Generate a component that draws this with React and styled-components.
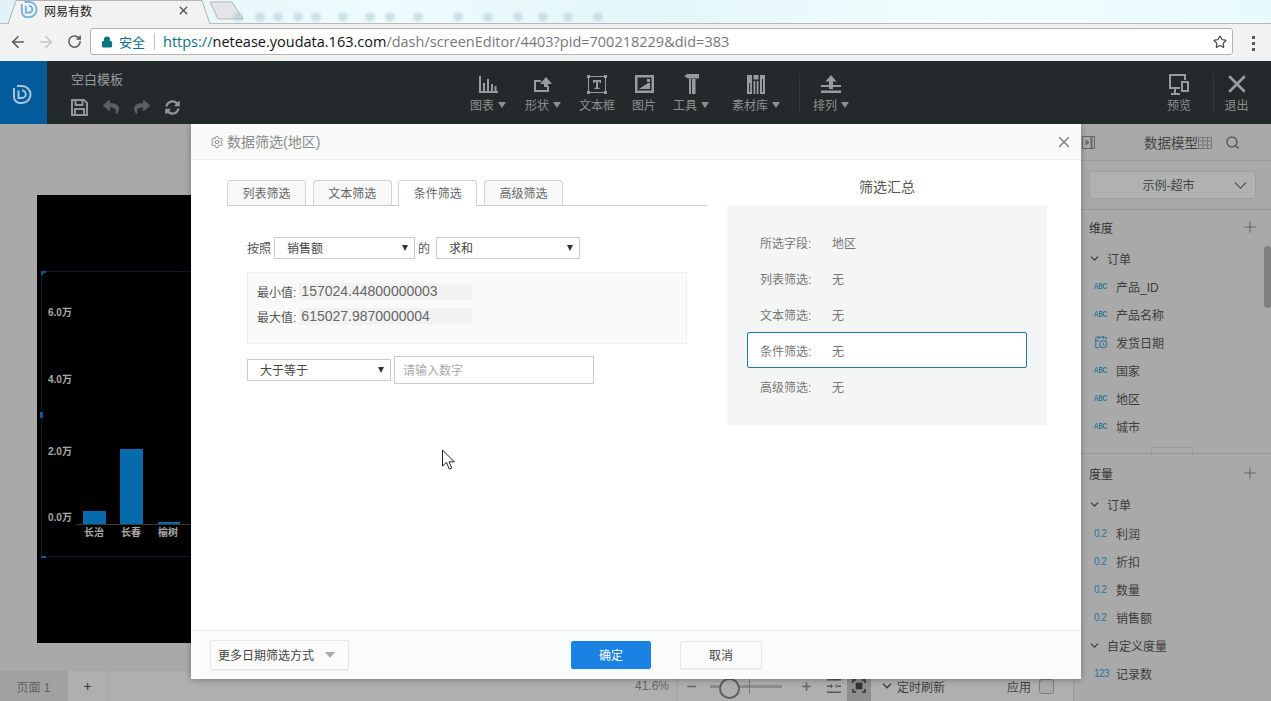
import React from 'react';
import styled, { createGlobalStyle } from 'styled-components';
import { ArrowLeft, ArrowRight, RotateCw, Lock, Star, X, ChevronDown, Plus, Search, Settings, CalendarClock, Minus } from 'lucide-react';
import { FaReply, FaShare, FaSyncAlt } from 'react-icons/fa';

const GlobalStyle = createGlobalStyle`
  html, body { margin: 0; padding: 0; }
  body {
    font-family: "Liberation Sans", "Noto Sans CJK SC", sans-serif;
    font-size: 12px;
    overflow: hidden;
    background: #aaa;
  }
  * { box-sizing: border-box; }
`;

const Page = styled.div`
  position: relative;
  width: 1271px;
  height: 701px;
  display: flex;
  flex-direction: column;
  overflow: hidden;
`;

/* browser chrome */
const TabStrip = styled.div`
  height: 24px;
  display: flex;
  align-items: flex-end;
  padding-left: 8px;
  background: linear-gradient(100deg, #dff3f8 0%, #eefcfd 30%, #e4f6f9 50%, #f0fdfe 75%, #e9fafc 100%);
  border-bottom: 1px solid #b9bbbc;
`;

const Tab = styled.div`
  position: relative;
  width: 202px;
  height: 24px;
  margin-bottom: -1px;
  flex-shrink: 0;
  display: flex;
  align-items: center;
  gap: 6px;
  padding: 0 0 4px 12px;
  font-size: 12px;
  color: #222;
`;

const TabShape = styled.svg`
  position: absolute;
  left: 0;
  top: 0;
`;

const TabLabel = styled.span`
  position: relative;
  flex: 1;
`;

const TabClose = styled(X)`
  position: relative;
  margin-right: 20px;
  color: #555;
`;

const LogoMark = styled.svg`
  position: relative;
  flex-shrink: 0;
`;

const StripArt = styled.svg`
  margin-left: -2px;
  align-self: flex-start;
  flex-shrink: 0;
`;

const AddressRow = styled.div`
  height: 37px;
  display: flex;
  align-items: flex-start;
  background: #f2f2f2;
  padding: 4px 0 0 4px;
  color: #5f6368;
`;

const NavButton = styled.div`
  width: 28px;
  height: 27px;
  display: flex;
  align-items: center;
  justify-content: center;
  color: ${p => (p.$off ? '#c4c6c8' : '#5a5a5a')};
`;

const UrlBox = styled.div`
  width: 1143px;
  height: 27px;
  margin-left: 2px;
  background: #fff;
  border: 1px solid #b4b4b4;
  border-radius: 3px;
  display: flex;
  align-items: center;
  padding: 0 5px 0 10px;
`;

const Secure = styled.span`
  display: flex;
  align-items: center;
  gap: 6px;
  color: #0b7285;
  font-size: 13px;
  padding-right: 9px;
  margin-right: 8px;
  border-right: 1px solid #c4c4c4;
  height: 17px;
`;

const Url = styled.span`
  flex: 1;
  font-family: "Open Sans", sans-serif;
  font-size: 14.5px;
  color: #777;
  white-space: nowrap;
`;

const UrlHost = styled.span`
  color: #111;
`;

const UrlScheme = styled.span`
  color: #0b7285;
`;

const MenuDots = styled.div`
  margin: 8px 0 0 19px;
  display: flex;
  flex-direction: column;
  gap: 3px;
  & i {
    width: 3px;
    height: 3px;
    background: #555;
    display: block;
  }
`;

/* app header */
const AppBar = styled.header`
  height: 63px;
  display: flex;
  background: #24292c;
  color: #8e8f90;
`;

const LogoBlock = styled.div`
  width: 47px;
  background: #045c9c;
  display: flex;
  align-items: center;
  justify-content: center;
  padding: 4px 4px 0 0;
`;

const TemplateBox = styled.div`
  width: 418px;
  padding: 10px 0 0 24px;
`;

const TemplateName = styled.div`
  font-size: 13px;
  line-height: 18px;
  color: #9a9b9c;
`;

const QuickTools = styled.div`
  display: flex;
  align-items: center;
  gap: 15px;
  margin-top: 8px;
  height: 20px;
`;

const QuickIcon = styled.span`
  display: flex;
  color: ${p => (p.$dim ? '#5d6062' : '#949596')};
  font-size: ${p => p.$size || 16}px;
`;

const ToolGroup = styled.div`
  display: flex;
  flex: 1;
  padding: 12px 12px 0 0;
`;

const ToolItem = styled.div`
  width: ${p => p.$w}px;
  margin-right: ${p => p.$mr || 0}px;
  display: flex;
  flex-direction: column;
  align-items: center;
  gap: 3px;
  font-size: 12px;
  line-height: 17px;
  white-space: nowrap;
`;

const ToolIconSlot = styled.div`
  height: 22px;
  display: flex;
  align-items: center;
  justify-content: center;
`;

const ToolLabel = styled.span`
  display: flex;
  align-items: center;
  gap: 4px;
`;

const ToolCaret = styled.i`
  width: 0;
  height: 0;
  margin-bottom: 3px;
  border-style: solid;
  border-width: 6px 4.500px 0;
  border-color: #8e8f90 transparent transparent;
`;

const ToolDivider = styled.div`
  width: 1px;
  height: 40px;
  background: #33383b;
  margin: ${p => p.$m || '1px 0 0'};
`;

const ToolSpacer = styled.div`
  flex: 1;
`;

/* working area */
const Workspace = styled.div`
  flex: 1;
  display: flex;
  min-height: 0;
`;

const Editor = styled.div`
  width: 1073px;
  display: flex;
  flex-direction: column;
  background: #a9a9a9;
`;

const Stage = styled.div`
  flex: 1;
  padding: 71px 0 0 37px;
`;

const Screen = styled.div`
  width: 797px;
  height: 448px;
  padding-top: 76px;
  background: #000;
`;

const ChartSvg = styled.svg`
  display: block;
`;

const PageBar = styled.div`
  height: 31px;
  display: flex;
  align-items: center;
  background: #aeb0af;
  border-top: 1px solid #a6a6a6;
  color: #5e5e5e;
  & > * {
    flex-shrink: 0;
  }
`;

const PageTab = styled.div`
  width: ${p => p.$w}px;
  height: 100%;
  display: flex;
  align-items: center;
  justify-content: center;
  background: ${p => (p.$active ? '#a1a1a1' : 'transparent')};
  border-right: 1px solid #a4a6a5;
  font-size: ${p => (p.$active ? 12 : 14)}px;
  color: ${p => (p.$active ? '#616161' : '#333')};
`;

const Zoom = styled.span`
  margin-left: 527px;
  width: 42px;
  font-size: 12px;
  color: #666;
`;

const BarDivider = styled.div`
  width: 1px;
  height: 100%;
  background: #a2a4a3;
  margin-right: ${p => p.$after || 0}px;
`;

const Slider = styled.div`
  position: relative;
  width: 72px;
  height: 3px;
  margin: 0 18px 0 12px;
  background: #8b8b8b;
  &::before {
    content: '';
    position: absolute;
    left: 9px;
    top: -7px;
    width: 17px;
    height: 17px;
    border: 2px solid #5f5f5f;
    border-radius: 50%;
    background: #aeb0af;
  }
  &::after {
    content: '';
    position: absolute;
    left: 39px;
    top: -6px;
    width: 1px;
    height: 15px;
    background: #777;
  }
`;

const FitIcon = styled.div`
  width: 24px;
  height: 100%;
  display: flex;
  align-items: center;
  justify-content: center;
  background: ${p => (p.$active ? '#8e8e8e' : 'transparent')};
  margin-left: ${p => p.$ml || 0}px;
`;

const Refresh = styled.div`
  display: flex;
  align-items: center;
  gap: 3px;
  margin-left: 9px;
  width: 127px;
  color: #3f3f3f;
`;

const Apply = styled.span`
  color: #3f3f3f;
  white-space: nowrap;
`;

const CheckBox = styled.span`
  width: 15px;
  height: 15px;
  margin: 0 18px 0 8px;
  border: 1px solid #7e7e7e;
  border-radius: 3px;
  background: #a9abaa;
`;

/* data model panel */
const SidePanel = styled.aside`
  flex: 1;
  display: flex;
  flex-direction: column;
  position: relative;
  background: #a9a9a9;
  color: #3c3c3c;
  border-left: 1px solid #9c9c9c;
`;

const PanelTitle = styled.div`
  height: 37px;
  display: flex;
  align-items: center;
  padding-left: 8px;
  border-bottom: 1px solid #989898;
  color: #444;
  font-size: 13px;
`;

const TitleText = styled.span`
  margin-left: 49px;
  font-size: 13.5px;
`;

const PanelSearch = styled(Search)`
  margin-left: 13px;
  color: #5c5c5c;
`;

const SelectRow = styled.div`
  height: 49px;
  padding: 10px 15px 0 15px;
  border-bottom: 1px solid #989898;
`;

const ModelSelect = styled.div`
  height: 28px;
  display: flex;
  align-items: center;
  justify-content: center;
  position: relative;
  background: #afb2b1;
  border: 1px solid #9f9f9f;
  border-radius: 3px;
  padding: 0 8px 2px 0;
  color: #444;
  & svg {
    position: absolute;
    right: 4px;
    top: 3px;
  }
`;

const SectionHead = styled.div`
  height: ${p => p.$h || 38}px;
  display: flex;
  align-items: center;
  justify-content: space-between;
  padding: 0 12px 0 15px;
  font-size: 12px;
  color: #333;
`;

const GroupRow = styled.div`
  height: ${p => p.$h || 28}px;
  margin-bottom: ${p => p.$mb || 0}px;
  display: flex;
  align-items: center;
  gap: 6px;
  padding-left: 14px;
  color: #3c3c3c;
`;

const FieldRow = styled.div`
  height: 28px;
  display: flex;
  align-items: center;
  padding-left: 15px;
  color: #3c3c3c;
`;

const FieldType = styled.span`
  width: 27px;
  padding-left: 5px;
  display: flex;
  color: #2f7597;
  font-size: 10px;
  letter-spacing: -0.6px;
`;

const AbcMark = styled.span`
  font-size: 9px;
  font-weight: 700;
  letter-spacing: -0.4px;
  transform: scaleX(0.72);
  transform-origin: left center;
`;

const FieldList = styled.div`
  flex: ${p => p.$grow || 'none'};
`;

const Handle = styled.div`
  height: 7px;
  margin-top: 7px;
  border-bottom: 1px solid #989898;
  display: flex;
  justify-content: center;
  &::after {
    content: '';
    width: 40px;
    height: 7px;
    margin-left: -2px;
    border: 1px solid #999;
    border-bottom: none;
  }
`;

const ScrollThumb = styled.div`
  position: absolute;
  right: 0;
  top: 122px;
  width: 7px;
  height: 62px;
  border-radius: 4px;
  background: #7f7f7f;
`;

/* dialog */
const Dialog = styled.div`
  position: absolute;
  left: 191px;
  top: 124px;
  width: 890px;
  height: 555px;
  display: flex;
  flex-direction: column;
  background: #fff;
  border-radius: 2px;
  box-shadow: 0 1px 6px rgba(0, 0, 0, 0.3);
`;

const DialogHead = styled.div`
  height: 36px;
  display: flex;
  align-items: center;
  gap: 3px;
  padding: 0 8px 0 19px;
  background: #fafafa;
  border-bottom: 1px solid #efefef;
  font-size: 14px;
  color: #8a8a8a;
`;

const DialogTitle = styled.span`
  flex: 1;
  padding-bottom: 1px;
`;

const DialogBody = styled.div`
  flex: 1;
  display: flex;
  gap: 20px;
  padding: 20px 34px 0 36px;
`;

const LeftPane = styled.div`
  width: 480px;
`;

const TabRow = styled.div`
  height: 26px;
  display: flex;
  gap: 6.670px;
  border-bottom: 1px solid #ccc;
`;

const FilterTab = styled.div`
  width: 79px;
  height: ${p => (p.$active ? 26 : 25)}px;
  padding-bottom: 2px;
  display: flex;
  align-items: center;
  justify-content: center;
  background: ${p => (p.$active ? '#fff' : '#f8f8f8')};
  border: 1px solid #d4d4d4;
  border-bottom: none;
  border-radius: 4px 4px 0 0;
  color: #666;
`;

const FormArea = styled.div`
  padding: 31px 20px 0;
`;

const ByRow = styled.div`
  display: flex;
  align-items: center;
  height: 22px;
  color: #555;
`;

const ByLabel = styled.span`
  margin-top: -2px;
`;

const FakeSelect = styled.div`
  width: ${p => p.$w}px;
  height: 22px;
  margin: ${p => p.$m || 0};
  display: flex;
  align-items: center;
  justify-content: space-between;
  padding: 0 6px 2px 12px;
  background: #fff;
  border: 1px solid #ccc;
  color: #444;
`;

const SelectCaret = styled.i`
  width: 0;
  height: 0;
  margin-top: 1px;
  border-style: solid;
  border-width: 6px 3px 0;
  border-color: #333 transparent transparent;
`;

const InfoBox = styled.div`
  width: 440px;
  height: 72px;
  margin-top: 13px;
  padding: 10px 9px;
  display: flex;
  flex-direction: column;
  gap: 8px;
  background: #fafafa;
  border: 1px solid #f0f0f0;
`;

const InfoRow = styled.div`
  display: flex;
  align-items: center;
  gap: 3px;
  color: #555;
`;

const InfoValue = styled.span`
  width: 173px;
  height: 17px;
  padding-left: 2px;
  font-size: 14px;
  line-height: 17px;
  background: #f2f2f2;
  color: #666;
`;

const ConditionRow = styled.div`
  display: flex;
  align-items: center;
  gap: 3px;
  margin-top: 12px;
`;

const NumberInput = styled.div`
  width: 200px;
  height: 28px;
  display: flex;
  align-items: center;
  padding: 0 0 2px 8px;
  border: 1px solid #ccc;
  color: #aaa;
`;

const RightPane = styled.div`
  width: 320px;
`;

const SummaryTitle = styled.div`
  height: 25px;
  display: flex;
  justify-content: center;
  line-height: 14px;
  color: #555;
  font-size: 14px;
`;

const SummaryBox = styled.div`
  height: 220px;
  padding: 19px 20px;
  background: #f4f5f5;
`;

const SummaryRow = styled.div`
  height: 36px;
  display: flex;
  align-items: center;
  padding-left: ${p => (p.$active ? 12 : 13)}px;
  color: #777;
  background: ${p => (p.$active ? '#fff' : 'transparent')};
  border: ${p => (p.$active ? '1px solid #24799f' : 'none')};
  border-radius: 2px;
`;

const SummaryKey = styled.span`
  width: 72px;
`;

const DialogFoot = styled.div`
  height: 49px;
  display: flex;
  align-items: center;
  padding-left: 19px;
  background: #fafbfb;
  border-top: 1px solid #ececec;
`;

const MoreButton = styled.div`
  width: 139px;
  height: 30px;
  display: flex;
  align-items: center;
  justify-content: space-between;
  padding: 0 13px 2px 7px;
  background: #fbfbfb;
  border: 1px solid #e6e6e6;
  border-radius: 2px;
  box-shadow: 0 1px 1px rgba(0, 0, 0, 0.06);
  color: #444;
`;

const MoreCaret = styled.i`
  width: 0;
  height: 0;
  margin-top: 1px;
  border-style: solid;
  border-width: 6px 5px 0;
  border-color: #aaa transparent transparent;
`;

const ActionButton = styled.div`
  width: ${p => p.$w}px;
  height: 28px;
  margin-left: ${p => p.$ml}px;
  padding-bottom: 2px;
  display: flex;
  align-items: center;
  justify-content: center;
  background: ${p => (p.$primary ? '#1a82e2' : '#fbfbfb')};
  border: 1px solid ${p => (p.$primary ? '#1a82e2' : '#e6e6e6')};
  border-radius: 2px;
  box-shadow: 0 1px 1px rgba(0, 0, 0, 0.06);
  color: ${p => (p.$primary ? '#fff' : '#444')};
`;

const Pointer = styled.svg`
  position: absolute;
  left: 441px;
  top: 449px;
`;

const Logo = ({ size = 20, color = '#a9c6da', stroke = 2 }) => (
  <LogoMark width={size} height={size} viewBox="0 0 20 20" fill="none" stroke={color} strokeWidth={stroke}>
    <path d="M2 3v9a6 6 0 0 0 6 6h2a8.500 8.500 0 0 0 0-17H5" />
    <path d="M6.500 5.500v7.500h3.500a3.750 3.750 0 0 0 0-7.500" />
  </LogoMark>
);

const TOOL = '#9a9b9c';

const ChartIcon = () => (
  <svg width="19" height="17" viewBox="0 0 19 17" fill={TOOL}>
    <path d="M0 0h2v15h17v2H0zM4 7h2v8H4zM8 3h2v12H8zM12 8h2v7h-2zM15.500 10h2v5h-2z" />
  </svg>
);
const ShapeIcon = () => (
  <svg width="18" height="15" viewBox="0 0 18 15" fill={TOOL}>
    <path d="M0 3h7v2H2v8h11V9h2v6H0z" />
    <path d="M12 0l6 7H6z" />
    <path d="M10 7h4v3h-4z" />
  </svg>
);
const TextIcon = () => (
  <svg width="20" height="19" viewBox="0 0 20 19" fill={TOOL}>
    <path d="M0 0h3v3H0zM17 0h3v3h-3zM0 16h3v3H0zM17 16h3v3h-3z" />
    <path d="M3 1h14v1H3zM3 17h14v1H3zM1 3h1v13H1zM18 3h1v13h-1z" />
    <path d="M6 5h8v3h-1.500V6.800H11v6h1.500V14h-5v-1.200H9v-6H7.500V8H6z" />
  </svg>
);
const ImageIcon = () => (
  <svg width="19" height="18" viewBox="0 0 19 18" fill={TOOL}>
    <path d="M0 0h19v18H0zm2.500 2.500v13h14v-13z" fillRule="evenodd" />
    <path d="M4 14l9-6h2v6z" />
    <path d="M12 4h3v3h-3z" />
  </svg>
);
const HammerIcon = () => (
  <svg width="15" height="20" viewBox="0 0 15 20" fill={TOOL}>
    <path d="M0 3l3-3h12v4.500H4L2 3z" />
    <path d="M5 5h2v15H5zM8 5h3.500v15H8z" />
  </svg>
);
const LibraryIcon = () => (
  <svg width="18" height="19" viewBox="0 0 18 19" fill={TOOL}>
    <path d="M0 0h5v19H0zM6.500 0h5v4.500h-5zM13 0h5v19h-5zM6.500 6h1.800v13H6.500zM9.700 6h1.800v13H9.700z" />
    <path d="M2.200 8h1v9h-1zM15 4h1v13h-1z" fill="#24292c" />
  </svg>
);
const ArrangeIcon = () => (
  <svg width="20" height="18" viewBox="0 0 20 18" fill={TOOL}>
    <path d="M10 0l5.500 6.500H12V10h8v2h-8v2H8v-2H0v-2h8V6.500H4.500z" />
    <path d="M0 15.500h20V18H0z" />
  </svg>
);
const PreviewIcon = () => (
  <svg width="20" height="21" viewBox="0 0 20 21" fill="none" stroke={TOOL} strokeWidth="2">
    <path d="M11 14H1V1h15v5" />
    <path d="M6 14v5M2 20h9" />
    <path d="M13 8h6v9h-6z" />
  </svg>
);
const SaveIcon = () => (
  <svg width="17" height="17" viewBox="0 0 17 17" fill="none" stroke="#949596" strokeWidth="2">
    <path d="M1 1h12l3 3v12H1z" />
    <path d="M4.500 1v5h7V1M4 16v-6h9v6" />
  </svg>
);

const ChartDrawing = () => (
  <ChartSvg width="160" height="300" viewBox="0 0 160 300">
    <g fontFamily='"Liberation Sans", "Noto Sans CJK SC", sans-serif' fontSize="10" fontWeight="700" fill="#a8a8a8">
      <text x="11" y="45">6.0万</text>
      <text x="11" y="112">4.0万</text>
      <text x="11" y="184">2.0万</text>
      <text x="11" y="250">0.0万</text>
      <text x="47" y="265">长治</text>
      <text x="84" y="265">长春</text>
      <text x="121" y="265">榆树</text>
    </g>
    <path d="M4.500 0V285.500M4.500 0.500H160M4.500 285.500H160" fill="none" stroke="#0b1a2a" />
    <path d="M4 0h5v2H6v2H4zM4 285h5v2H4zM3 141h3v6H3z" fill="#0a5a96" />
    <path d="M39 253.500H160" stroke="#3a3a3a" />
    <path d="M46 240h23v13H46zM83 178h23v75H83zM121 251h22v2h-22z" fill="#066aad" />
  </ChartSvg>
);

const SMUDGES = [30, 52, 70, 90, 108, 135, 162, 182, 210, 250, 280, 310, 335, 360, 390];

const App = () => (
  <Page>
    <GlobalStyle />
    <TabStrip>
      <Tab>
        <TabShape width="202" height="24" viewBox="0 0 202 24">
          <path d="M0 24L8 0.500H194L202 24" fill="#f2f2f2" stroke="#b0b2b3" />
        </TabShape>
        <Logo size={18} color="#6db0dc" />
        <TabLabel>网易有数</TabLabel>
        <TabClose size={13} strokeWidth={2.5} />
      </Tab>
      <StripArt width="420" height="23" viewBox="0 0 420 23">
        <defs>
          <filter id="smudge"><feGaussianBlur stdDeviation="1.6" /></filter>
        </defs>
        <path d="M2 2h22l11 17H10z" fill="#e3e5e6" stroke="#b5b7b8" />
        {SMUDGES.map(x => (
          <ellipse key={x} cx={x} cy="17" rx="5" ry="4.500" fill="#aac6d2" opacity="0.5" filter="url(#smudge)" />
        ))}
      </StripArt>
    </TabStrip>
    <AddressRow>
      <NavButton><ArrowLeft size={18} strokeWidth={2.2} /></NavButton>
      <NavButton $off><ArrowRight size={18} strokeWidth={2.2} /></NavButton>
      <NavButton><RotateCw size={15} strokeWidth={2.4} /></NavButton>
      <UrlBox>
        <Secure><Lock size={12} fill="#0b7285" strokeWidth={2.4} />安全</Secure>
        <Url>
          <UrlScheme>https://</UrlScheme>
          <UrlHost>netease.youdata.163.com</UrlHost>
          /dash/screenEditor/4403?pid=700218229&amp;did=383
        </Url>
        <Star size={14} color="#444" strokeWidth={2} />
      </UrlBox>
      <MenuDots><i /><i /><i /></MenuDots>
    </AddressRow>
    <AppBar>
      <LogoBlock><Logo size={20} /></LogoBlock>
      <TemplateBox>
        <TemplateName>空白模板</TemplateName>
        <QuickTools>
          <QuickIcon><SaveIcon /></QuickIcon>
          <QuickIcon $dim><FaReply /></QuickIcon>
          <QuickIcon $dim><FaShare /></QuickIcon>
          <QuickIcon $size={15}><FaSyncAlt /></QuickIcon>
        </QuickTools>
      </TemplateBox>
      <ToolGroup>
        <ToolItem $w={46}><ToolIconSlot><ChartIcon /></ToolIconSlot><ToolLabel>图表<ToolCaret /></ToolLabel></ToolItem>
        <ToolItem $w={64}><ToolIconSlot><ShapeIcon /></ToolIconSlot><ToolLabel>形状<ToolCaret /></ToolLabel></ToolItem>
        <ToolItem $w={44}><ToolIconSlot><TextIcon /></ToolIconSlot><ToolLabel>文本框</ToolLabel></ToolItem>
        <ToolItem $w={50}><ToolIconSlot><ImageIcon /></ToolIconSlot><ToolLabel>图片</ToolLabel></ToolItem>
        <ToolItem $w={44}><ToolIconSlot><HammerIcon /></ToolIconSlot><ToolLabel>工具<ToolCaret /></ToolLabel></ToolItem>
        <ToolItem $w={86}><ToolIconSlot><LibraryIcon /></ToolIconSlot><ToolLabel>素材库<ToolCaret /></ToolLabel></ToolItem>
        <ToolDivider $m="1px 12px 0 0" />
        <ToolItem $w={38}><ToolIconSlot><ArrangeIcon /></ToolIconSlot><ToolLabel>排列<ToolCaret /></ToolLabel></ToolItem>
        <ToolSpacer />
        <ToolItem $w={44} $mr={12}><ToolIconSlot><PreviewIcon /></ToolIconSlot><ToolLabel>预览</ToolLabel></ToolItem>
        <ToolDivider />
        <ToolItem $w={45}><ToolIconSlot><X size={28} strokeWidth={2.4} color={TOOL} /></ToolIconSlot><ToolLabel>退出</ToolLabel></ToolItem>
      </ToolGroup>
    </AppBar>
    <Workspace>
      <Editor>
        <Stage>
          <Screen>
            <ChartDrawing />
          </Screen>
        </Stage>
        <PageBar>
          <PageTab $active $w={68}>页面 1</PageTab>
          <PageTab $w={40}>+</PageTab>
          <Zoom>41.6%</Zoom>
          <BarDivider $after={7} />
          <Minus size={13} strokeWidth={3} color="#666" />
          <Slider />
          <Plus size={13} strokeWidth={3} color="#666" />
          <FitIcon $ml={9}>
            <svg width="14" height="14" viewBox="0 0 14 14" fill="#555"><path d="M0 0h14v1.500H0zM0 12.500h14V14H0zM0 6.500h5v1.500H0zM9 6.500h5v1.500H9zM4 4.500l2 2.700-2 2.300zM10 4.500L8 7.200l2 2.300z" /></svg>
          </FitIcon>
          <FitIcon $active $ml={1}>
            <svg width="14" height="14" viewBox="0 0 14 14" fill="none" stroke="#333" strokeWidth="1.600"><path d="M1 4V1h3M10 1h3v3M13 10v3h-3M4 13H1v-3" /><rect x="4.500" y="4.500" width="5" height="5" fill="#333" /></svg>
          </FitIcon>
          <Refresh><ChevronDown size={14} strokeWidth={2.5} />定时刷新</Refresh>
          <Apply>应用</Apply>
          <CheckBox />
        </PageBar>
      </Editor>
      <SidePanel>
        <PanelTitle>
          <svg width="13" height="13" viewBox="0 0 13 13" fill="none" stroke="#666"><path d="M.5.500h12v12H.5z" /><path d="M9.500 1v11" strokeWidth="2" /><path d="M4 4l3 2.500L4 9z" fill="#666" /></svg>
          <TitleText>数据模型</TitleText>
          <svg width="14" height="13" viewBox="0 0 14 13" fill="none" stroke="#777"><path d="M.5 1.500h13v11H.5zM.5 5h13M.5 9h13M5 1.500v11M9.500 1.500v11" /></svg>
          <PanelSearch size={15} strokeWidth={2.4} />
        </PanelTitle>
        <SelectRow>
          <ModelSelect>示例-超市<ChevronDown size={21} color="#444" strokeWidth={1.2} /></ModelSelect>
        </SelectRow>
        <SectionHead $h={34}>维度<Plus size={18} color="#666" strokeWidth={1.4} /></SectionHead>
        <FieldList>
          <GroupRow><ChevronDown size={13} strokeWidth={2.5} />订单</GroupRow>
          <FieldRow><FieldType><AbcMark>ABC</AbcMark></FieldType>产品_ID</FieldRow>
          <FieldRow><FieldType><AbcMark>ABC</AbcMark></FieldType>产品名称</FieldRow>
          <FieldRow><FieldType><CalendarClock size={14} strokeWidth={1.8} /></FieldType>发货日期</FieldRow>
          <FieldRow><FieldType><AbcMark>ABC</AbcMark></FieldType>国家</FieldRow>
          <FieldRow><FieldType><AbcMark>ABC</AbcMark></FieldType>地区</FieldRow>
          <FieldRow><FieldType><AbcMark>ABC</AbcMark></FieldType>城市</FieldRow>
        </FieldList>
        <Handle />
        <SectionHead>度量<Plus size={18} color="#666" strokeWidth={1.4} /></SectionHead>
        <FieldList $grow="1">
          <GroupRow $h={24} $mb={3}><ChevronDown size={13} strokeWidth={2.5} />订单</GroupRow>
          <FieldRow><FieldType>0.2</FieldType>利润</FieldRow>
          <FieldRow><FieldType>0.2</FieldType>折扣</FieldRow>
          <FieldRow><FieldType>0.2</FieldType>数量</FieldRow>
          <FieldRow><FieldType>0.2</FieldType>销售额</FieldRow>
          <GroupRow><ChevronDown size={13} strokeWidth={2.5} />自定义度量</GroupRow>
          <FieldRow><FieldType>123</FieldType>记录数</FieldRow>
        </FieldList>
        <ScrollThumb />
      </SidePanel>
    </Workspace>
    <Dialog>
      <DialogHead>
        <Settings size={14} strokeWidth={1.4} color="#777" />
        <DialogTitle>数据筛选(地区)</DialogTitle>
        <X size={18} strokeWidth={1.6} color="#777" />
      </DialogHead>
      <DialogBody>
        <LeftPane>
          <TabRow>
            <FilterTab>列表筛选</FilterTab>
            <FilterTab>文本筛选</FilterTab>
            <FilterTab $active>条件筛选</FilterTab>
            <FilterTab>高级筛选</FilterTab>
          </TabRow>
          <FormArea>
            <ByRow>
              <ByLabel>按照</ByLabel>
              <FakeSelect $w={141} $m="0 3px">销售额<SelectCaret /></FakeSelect>
              <ByLabel>的</ByLabel>
              <FakeSelect $w={144} $m="0 0 0 6px">求和<SelectCaret /></FakeSelect>
            </ByRow>
            <InfoBox>
              <InfoRow>最小值:<InfoValue>157024.44800000003</InfoValue></InfoRow>
              <InfoRow>最大值:<InfoValue>615027.9870000004</InfoValue></InfoRow>
            </InfoBox>
            <ConditionRow>
              <FakeSelect $w={144}>大于等于<SelectCaret /></FakeSelect>
              <NumberInput>请输入数字</NumberInput>
            </ConditionRow>
          </FormArea>
        </LeftPane>
        <RightPane>
          <SummaryTitle>筛选汇总</SummaryTitle>
          <SummaryBox>
            <SummaryRow><SummaryKey>所选字段:</SummaryKey>地区</SummaryRow>
            <SummaryRow><SummaryKey>列表筛选:</SummaryKey>无</SummaryRow>
            <SummaryRow><SummaryKey>文本筛选:</SummaryKey>无</SummaryRow>
            <SummaryRow $active><SummaryKey>条件筛选:</SummaryKey>无</SummaryRow>
            <SummaryRow><SummaryKey>高级筛选:</SummaryKey>无</SummaryRow>
          </SummaryBox>
        </RightPane>
      </DialogBody>
      <DialogFoot>
        <MoreButton>更多日期筛选方式<MoreCaret /></MoreButton>
        <ActionButton $primary $w={80} $ml={222}>确定</ActionButton>
        <ActionButton $w={82} $ml={29}>取消</ActionButton>
      </DialogFoot>
    </Dialog>
    <Pointer width="15" height="22" viewBox="0 0 15 22">
      <path d="M1.500 1v16l4-3.500 2.800 6.500 2.500-1-2.800-6.200h5.300z" fill="#fff" stroke="#222" strokeWidth="1" />
    </Pointer>
  </Page>
);

export default App;
